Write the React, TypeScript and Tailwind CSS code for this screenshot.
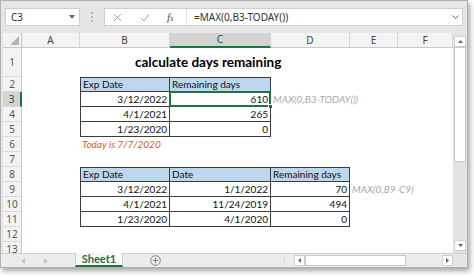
import React from "react";

const COLS = ["A", "B", "C", "D", "E", "F"];
const ROWS = [1, 2, 3, 4, 5, 6, 7, 8, 9, 10, 11, 12, 13];

type Cell = {
  text: string;
  kind: "head" | "num" | "note" | "today" | "title";
};

const cells: Record<string, Cell> = {
  B1: { text: "calculate days remaining", kind: "title" },
  B2: { text: "Exp Date", kind: "head" },
  C2: { text: "Remaining days", kind: "head" },
  B3: { text: "3/12/2022", kind: "num" },
  C3: { text: "610", kind: "num" },
  D3: { text: "MAX(0,B3-TODAY())", kind: "note" },
  B4: { text: "4/1/2021", kind: "num" },
  C4: { text: "265", kind: "num" },
  B5: { text: "1/23/2020", kind: "num" },
  C5: { text: "0", kind: "num" },
  B6: { text: "Today is 7/7/2020", kind: "today" },
  B8: { text: "Exp Date", kind: "head" },
  C8: { text: "Date", kind: "head" },
  D8: { text: "Remaining days", kind: "head" },
  B9: { text: "3/12/2022", kind: "num" },
  C9: { text: "1/1/2022", kind: "num" },
  D9: { text: "70", kind: "num" },
  E9: { text: "MAX(0,B9-C9)", kind: "note" },
  B10: { text: "4/1/2021", kind: "num" },
  C10: { text: "11/24/2019", kind: "num" },
  D10: { text: "494", kind: "num" },
  B11: { text: "1/23/2020", kind: "num" },
  C11: { text: "4/1/2020", kind: "num" },
  D11: { text: "0", kind: "num" },
};

// table ranges: [firstCol, lastCol, firstRow, lastRow] (col index into COLS)
const tables = [
  [1, 2, 2, 5],
  [1, 3, 8, 11],
];

function clsxLike(...parts: (string | false)[]) {
  return parts.filter(Boolean).join(" ");
}

function borderFor(c: number, r: number) {
  for (const [c0, c1, r0, r1] of tables) {
    if (c >= c0 && c <= c1 && r >= r0 && r <= r1) {
      return clsxLike(
        "border-r border-b border-[#3c3c3c]",
        c === c0 && "border-l",
        r === r0 && "border-t"
      );
    }
  }
  return "";
}

function GridCell({ c, r }: { c: number; r: number }) {
  const key = `${COLS[c]}${r}`;
  const cell = cells[key];
  const isHead = cell?.kind === "head";
  const selected = key === "C3";

  let inner: React.ReactNode = null;
  if (cell) {
    if (cell.kind === "title") {
      inner = (
        <span className="pl-[55px] text-[13.5px] font-bold text-black">
          {cell.text}
        </span>
      );
    } else if (cell.kind === "head") {
      inner = <span className="pl-[2px] text-[#111]">{cell.text}</span>;
    } else if (cell.kind === "num") {
      inner = <span className="ml-auto pr-[2px] text-[#111]">{cell.text}</span>;
    } else if (cell.kind === "note") {
      inner = (
        <span className="pl-[2px] italic text-[#a9a9a9]">{cell.text}</span>
      );
    } else {
      inner = (
        <span className="pl-[2px] italic text-[#c8632a]">{cell.text}</span>
      );
    }
  }

  return (
    <div
      className={clsxLike(
        "relative flex items-center whitespace-nowrap overflow-visible",
        borderFor(c, r),
        isHead && "bg-[#bdd7ee]"
      )}
    >
      {inner}
      {selected && (
        <>
          <div className="absolute -left-[1px] -top-[1px] -right-[1px] -bottom-[1px] border-2 border-[#217346]" />
          <div className="absolute -right-[3px] -bottom-[3px] w-[5px] h-[5px] bg-[#217346] border border-white" />
        </>
      )}
    </div>
  );
}

function FormulaBar() {
  return (
    <div className="h-[32px] flex items-start pt-[7px] pl-[4px] pr-[4px] text-[10px] font-['Noto_Sans',sans-serif] text-[#333]">
      <div className="w-[75px] h-[18px] bg-white border border-[#cfcfcf] flex items-center pl-[5px] pr-[4px]">
        <span>C3</span>
        <svg className="ml-auto" width="6" height="4" viewBox="0 0 6 4">
          <path d="M0 0 H6 L3 4 Z" fill="#666" />
        </svg>
      </div>
      <div className="w-[24px] h-[18px] flex flex-col items-center justify-center gap-[2px]">
        <div className="w-[2px] h-[2px] bg-[#b8b8b8]" />
        <div className="w-[2px] h-[2px] bg-[#b8b8b8]" />
        <div className="w-[2px] h-[2px] bg-[#b8b8b8]" />
      </div>
      <div className="flex-1 h-[18px] bg-white border border-[#cfcfcf] flex items-center">
        <div className="w-[82px] h-full flex items-center border-r border-[#e2e2e2]">
          <svg className="ml-[8px]" width="9" height="9" viewBox="0 0 9 9">
            <path d="M1 1 L8 8 M8 1 L1 8" stroke="#a6a6a6" strokeWidth="1" />
          </svg>
          <svg className="ml-[18px]" width="10" height="9" viewBox="0 0 10 9">
            <path d="M1 5 L4 8 L9 1" stroke="#a6a6a6" strokeWidth="1" fill="none" />
          </svg>
          <span className="ml-[17px] italic font-['Liberation_Serif',serif] text-[11px] text-[#555]">
            f<span className="text-[8px]">x</span>
          </span>
        </div>
        <span className="ml-[7px]">=MAX(0,B3-TODAY())</span>
        <svg className="ml-auto mr-[3px]" width="7" height="4" viewBox="0 0 7 4">
          <path d="M0.5 0.5 L3.5 3.5 L6.5 0.5" stroke="#666" fill="none" />
        </svg>
      </div>
    </div>
  );
}

function Sheet() {
  return (
    <div className="w-[450px] h-[220px] overflow-hidden bg-white">
      <div className="grid grid-cols-[19px_58px_90px_101px_79px_48px_55px] grid-rows-[15px_29px_repeat(12,15px)] text-[10px] font-['Lato',sans-serif]">
        {/* header row */}
        <div className="relative bg-[#f3f3f3] border-r border-b border-[#c8c8c8]">
          <svg className="absolute right-[2px] bottom-[2px]" width="9" height="9" viewBox="0 0 9 9">
            <path d="M9 0 V9 H0 Z" fill="#b4b4b4" />
          </svg>
        </div>
        {COLS.map((col) => (
          <div
            key={col}
            className={clsxLike(
              "flex items-center justify-center border-r border-[#d6d6d6] font-['Noto_Sans',sans-serif] text-[10px]",
              col === "C"
                ? "bg-[#d3d3d3] border-b-2 border-b-[#217346] text-[#1f5a38]"
                : "bg-[#f3f3f3] border-b border-b-[#c8c8c8] text-[#444]"
            )}
          >
            {col}
          </div>
        ))}
        {ROWS.map((r) => (
          <React.Fragment key={r}>
            <div
              className={clsxLike(
                "flex items-center justify-center border-b border-[#dadada] font-['Noto_Sans',sans-serif] text-[10px]",
                r === 3
                  ? "bg-[#d3d3d3] border-r-2 border-r-[#217346] text-[#1f5a38]"
                  : "bg-[#f3f3f3] border-r border-r-[#c8c8c8] text-[#555]"
              )}
            >
              {r}
            </div>
            {COLS.map((_, c) => (
              <GridCell key={c} c={c} r={r} />
            ))}
          </React.Fragment>
        ))}
      </div>
    </div>
  );
}

function VScroll() {
  return (
    <div className="w-[14px] h-[220px] flex flex-col items-center pt-[3px] pb-[2px] bg-[#e3e3e3]">
      <div className="w-[12px] h-[11px] bg-white border border-[#d0d0d0] flex items-center justify-center">
        <svg width="5" height="3" viewBox="0 0 5 3">
          <path d="M0 3 L2.5 0 L5 3 Z" fill="#666" />
        </svg>
      </div>
      <div className="w-[12px] h-[115px] bg-white border border-[#c9c9c9]" />
      <div className="flex-1" />
      <div className="w-[12px] h-[11px] bg-white border border-[#d0d0d0] flex items-center justify-center">
        <svg width="5" height="3" viewBox="0 0 5 3">
          <path d="M0 0 L2.5 3 L5 0 Z" fill="#666" />
        </svg>
      </div>
    </div>
  );
}

function TabBar() {
  return (
    <div className="h-[14px] flex items-stretch bg-[#ececec] border-t border-[#cfcfcf] font-['Lato',sans-serif]">
      <div className="w-[74px] flex items-center pl-[20px] gap-[19px]">
        <svg width="4" height="6" viewBox="0 0 4 6">
          <path d="M4 0 L0 3 L4 6 Z" fill="#c4c4c4" />
        </svg>
        <svg width="4" height="6" viewBox="0 0 4 6">
          <path d="M0 0 L4 3 L0 6 Z" fill="#c4c4c4" />
        </svg>
      </div>
      <div className="w-[48px] -mt-[1px] bg-[#f8f8f8] border-l border-r border-[#cfcfcf] border-b-2 border-b-[#217346] flex items-center justify-center text-[11px] font-bold text-[#217346]">
        Sheet1
      </div>
      <div className="w-[60px] flex items-center justify-center pl-[4px]">
        <svg width="11" height="11" viewBox="0 0 11 11">
          <circle cx="5.5" cy="5.5" r="4.8" stroke="#7a7a7a" fill="none" strokeWidth="0.9" />
          <path d="M5.5 3 V8 M3 5.5 H8" stroke="#7a7a7a" strokeWidth="0.9" />
        </svg>
      </div>
      <div className="flex-1 flex items-center justify-end">
        <div className="flex flex-col gap-[1px] mr-[9px]">
          <div className="w-[1px] h-[1px] bg-[#b8b8b8]" />
          <div className="w-[1px] h-[1px] bg-[#b8b8b8]" />
          <div className="w-[1px] h-[1px] bg-[#b8b8b8]" />
        </div>
        <div className="w-[11px] h-[11px] bg-white border border-[#d0d0d0] flex items-center justify-center">
          <svg width="3" height="5" viewBox="0 0 3 5">
            <path d="M3 0 L0 2.5 L3 5 Z" fill="#666" />
          </svg>
        </div>
        <div className="w-[101px] h-[11px] bg-white border border-[#c9c9c9]" />
        <div className="w-[36px]" />
        <div className="w-[11px] h-[11px] bg-white border border-[#d0d0d0] flex items-center justify-center">
          <svg width="3" height="5" viewBox="0 0 3 5">
            <path d="M0 0 L3 2.5 L0 5 Z" fill="#666" />
          </svg>
        </div>
      </div>
      <div className="w-[14px] bg-[#e6e6e6]" />
    </div>
  );
}

export default function App() {
  return (
    <div className="w-[474px] h-[277px] bg-white overflow-hidden">
      <div className="w-[468px] h-[268px] bg-[#e6e6e6] border border-[#b0b0b0] shadow-[2px_3px_5px_rgba(0,0,0,0.35)] flex flex-col">
        <FormulaBar />
        <div className="flex pl-[2px]">
          <Sheet />
          <VScroll />
        </div>
        <TabBar />
      </div>
    </div>
  );
}
